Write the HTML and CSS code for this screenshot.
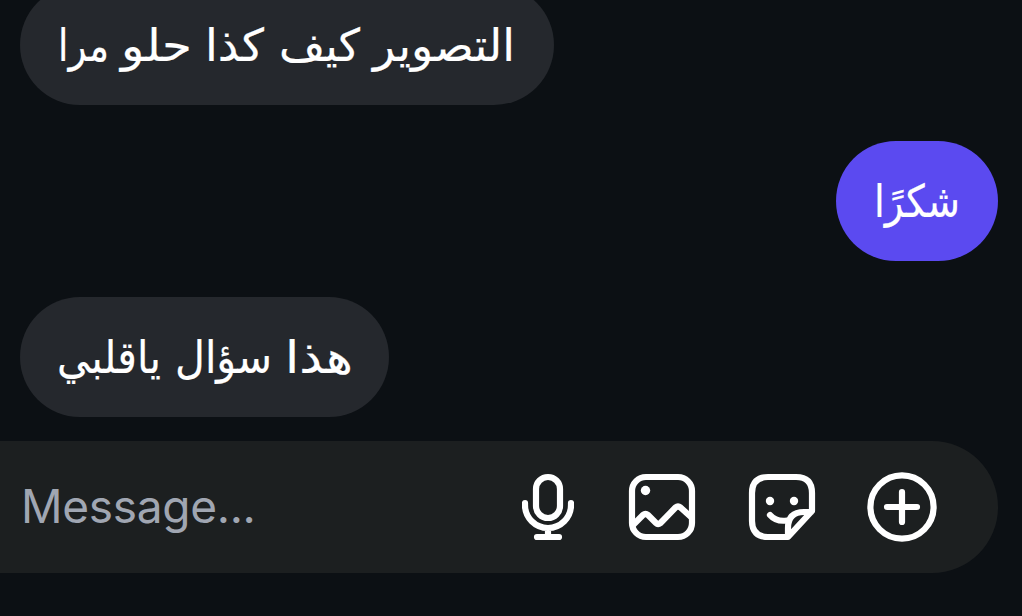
FILE: index.html
```html
<!DOCTYPE html>
<html lang="ar">
<head>
<meta charset="utf-8">
<title>Chat</title>
<link rel="stylesheet" href="styles.css">
</head>
<body>
<main class="thread">
  <div class="bubble received first"><svg class="line" width="460" height="60"><text y="46"><tspan x="458" textLength="142" lengthAdjust="spacingAndGlyphs">التصوير</tspan> <tspan x="303" textLength="81" lengthAdjust="spacingAndGlyphs">كيف</tspan> <tspan x="207" textLength="59" lengthAdjust="spacingAndGlyphs">كذا</tspan> <tspan x="135" textLength="71" lengthAdjust="spacingAndGlyphs">حلو</tspan> <tspan x="52" textLength="51" lengthAdjust="spacingAndGlyphs">مرا</tspan></text></svg></div>
  <div class="bubble sent"><svg class="line" width="88" height="60"><text y="46"><tspan x="87" textLength="86" lengthAdjust="spacingAndGlyphs">شكرًا</tspan></text></svg></div>
  <div class="bubble received last"><svg class="line" width="295" height="60"><text y="46"><tspan x="296" textLength="68" lengthAdjust="spacingAndGlyphs">هذا</tspan> <tspan x="215" textLength="97" lengthAdjust="spacingAndGlyphs">سؤال</tspan> <tspan x="104" textLength="104" lengthAdjust="spacingAndGlyphs">ياقلبي</tspan></text></svg></div>
</main>
<footer class="composer">
  <span class="placeholder">Message...</span>
  <div class="actions">
    <svg class="mic" viewBox="0 0 52 70"><rect x="14" y="5" width="24" height="41" rx="12"/><path d="M3 31v2a23 23 0 0 0 46 0v-2M26 56v9M15 65h22"/></svg>
    <svg class="photo" viewBox="0 0 68 70"><rect x="4" y="5" width="60" height="60" rx="14"/><circle class="dot" cx="17.5" cy="18.5" r="4.7"/><path d="M5 53l10-10q2.500-2 5 0l8 8q2 2 4.500 0l15-15.500q2.500-2 5 0L63 45"/></svg>
    <svg class="sticker" viewBox="0 0 68 70"><path d="M40 65H20Q4 65 4 49V21Q4 5 20 5h28q16 0 16 16v18zM40 64v-8q0-16 16-16h7"/><path d="M22 43q6 7 17 5.500"/><circle class="dot" cx="22" cy="29" r="4.200"/><circle class="dot" cx="46" cy="29" r="4.200"/></svg>
    <svg class="plus" viewBox="0 0 70 70"><circle cx="35" cy="35" r="31.600"/><path d="M35 20v30M20 35h30"/></svg>
  </div>
</footer>
</body>
</html>
```
FILE: styles.css
```css
* { box-sizing: border-box; }
body { margin: 0; width: 1022px; height: 616px; overflow: hidden; background: #0c1014; color: #fff; font-family: Inter, "Noto Sans", "DejaVu Sans", sans-serif; }
.thread { display: flex; flex-direction: column; gap: 36px; padding: 0 24px 0 20px; margin-top: -15px; }
.bubble { height: 120px; border-radius: 60px; padding: 30px 37px; background: #25282d; }
.received { align-self: flex-start; }
.sent { align-self: flex-end; background: #5b4af0; }
.first { width: 534px; }
.sent { width: 162px; }
.last { width: 369px; }
.line { display: block; overflow: visible; fill: #fff; stroke: #fff; stroke-width: 0.2px; font: 45px "DejaVu Sans", sans-serif; direction: rtl; }
.composer { margin: 24px 24px 0 -66px; height: 132px; border-radius: 66px; background: #1c1f20; display: flex; align-items: center; justify-content: space-between; padding: 0 61px 0 87px; }
.placeholder { font-size: 46px; line-height: 56px; padding-bottom: 2px; letter-spacing: -0.3px; color: #a0a6b2; }
.actions { display: flex; align-items: center; gap: 52px; }
.actions svg { height: 70px; fill: none; stroke: #fff; stroke-width: 6.2; stroke-linecap: round; stroke-linejoin: round; }
.actions .dot { fill: #fff; stroke: none; }
.mic { width: 52px; margin-right: 2px; }
.photo, .sticker { width: 68px; }
.sticker { margin-right: -1px; }
.plus { width: 70px; }
```
